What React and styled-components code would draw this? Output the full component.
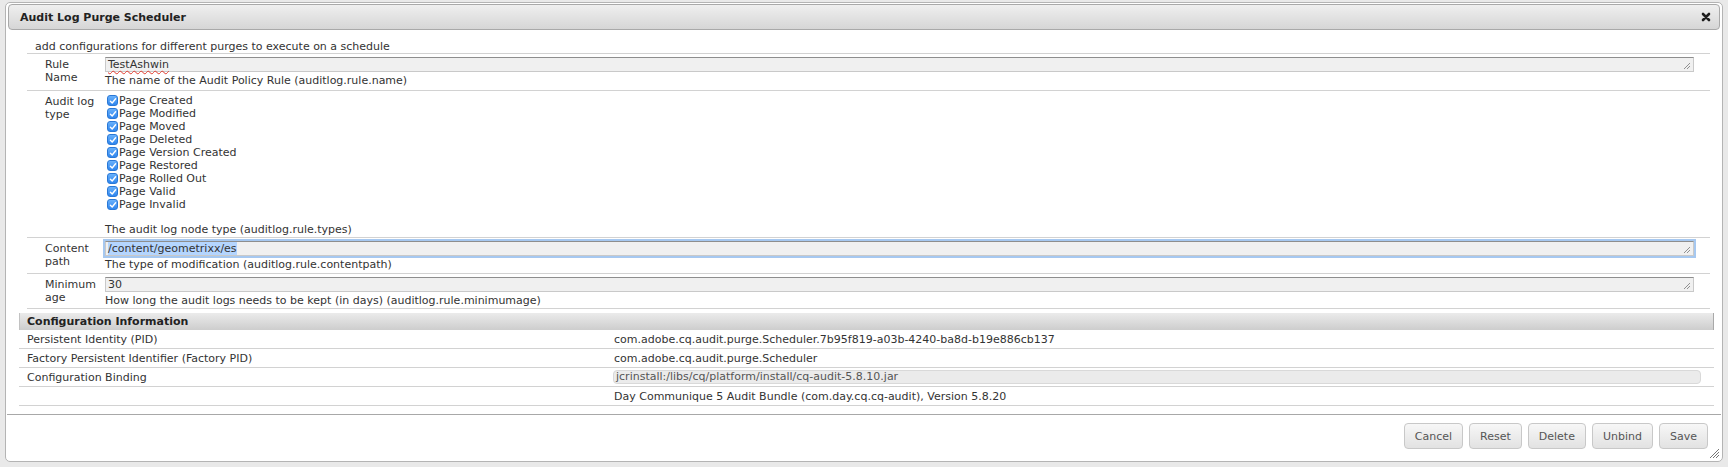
import styled, { createGlobalStyle } from "styled-components";

const GlobalStyle = createGlobalStyle`
  html, body { margin: 0; padding: 0; }
  body {
    background: #e9e9e9;
    font-family: "DejaVu Sans", Verdana, sans-serif;
    font-size: 11px;
    color: #333;
  }
`;

const Dialog = styled.div`
  position: relative;
  box-sizing: border-box;
  margin: 2px 0 0 5px;
  width: 1718px;
  height: 460px;
  background: #fff;
  border: 1px solid #b4b4b4;
  border-radius: 5px;
  padding: 1px 2px 0 2px;
  display: flex;
  flex-direction: column;
`;

const TitleBar = styled.div`
  box-sizing: border-box;
  height: 26px;
  display: flex;
  align-items: center;
  justify-content: space-between;
  padding: 0 8px 0 11px;
  border: 1px solid #a9a9a9;
  border-radius: 4px;
  background: linear-gradient(#efefef, #d6d6d6);
`;

const Title = styled.span`
  font-weight: bold;
  color: #222;
`;

const Body = styled.div`
  flex: 1;
  padding-top: 10px;
`;

const Intro = styled.div`
  line-height: 13px;
  padding-left: 27px;
`;

const Form = styled.div`
  margin: 0 10px 0 19px;
  border-bottom: 1px solid #d2d2d2;
`;

const Row = styled.div`
  display: grid;
  grid-template-columns: 78px 1fr;
  border-top: 1px solid #d2d2d2;
  padding: 3px 16px ${(p) => p.$pb ?? 3}px 0;
  line-height: 13px;
`;

const Label = styled.div`
  padding: 1px 6px 0 18px;
`;

const Field = styled.div`
  position: relative;
  box-sizing: border-box;
  height: 15px;
  margin-bottom: 2px;
  line-height: 13px;
  padding: 0 2px;
  background: #f0f0f0;
  border: 1px solid #c9c9c9;
  border-top-color: #8e8e8e;
  box-shadow: ${(p) => (p.$focused ? "0 0 0 2px #a6c8f0" : "none")};
  white-space: nowrap;
`;

const Misspelled = styled.span`
  text-decoration: underline wavy #e23b2e;
  text-decoration-thickness: 1px;
  text-underline-offset: 2px;
`;

const Selected = styled.span`
  background: #b4d5fe;
`;

const Grip = styled.svg`
  position: absolute;
  right: 2px;
  bottom: 1px;
`;

const Hint = styled.div`
  margin-top: ${(p) => p.$gap ?? 0}px;
`;

const Options = styled.div`
  display: flex;
  flex-direction: column;
`;

const Option = styled.label`
  display: flex;
  align-items: center;
  height: 13px;
`;

const Box = styled.span`
  box-sizing: border-box;
  width: 11px;
  height: 11px;
  margin: 0 1px 0 2px;
  border-radius: 3px;
  background: linear-gradient(#69b1fb, #2f86ee);
  border: 1px solid #2a78d6;
  display: flex;
  align-items: center;
  justify-content: center;
`;

const Config = styled.div`
  margin: 4px 6px 0 11px;
`;

const ConfigHead = styled.div`
  height: 17px;
  line-height: 17px;
  padding-left: 7px;
  font-weight: bold;
  color: #222;
  background: linear-gradient(#ebebeb, #cdcdcd);
  border-left: 1px solid #c2c2c2;
  border-right: 1px solid #a9a9a9;
`;

const ConfigRow = styled.div`
  display: grid;
  grid-template-columns: 587px 1fr;
  align-items: center;
  height: 18px;
  padding-left: 8px;
  border-bottom: 1px solid #d2d2d2;
`;

const Binding = styled.div`
  box-sizing: border-box;
  height: 14px;
  line-height: 12px;
  margin: 0 13px 0 -1px;
  padding-left: 2px;
  background: #ebebeb;
  border: 1px solid #d9d9d9;
  border-radius: 4px;
  color: #555;
`;

const Footer = styled.div`
  box-sizing: border-box;
  height: 47px;
  margin: 0 -1px;
  border-top: 1px solid #a8a8a8;
  padding: 8px 13px 0 0;
  display: flex;
  justify-content: flex-end;
  align-items: flex-start;
  gap: 6px;
`;

const Button = styled.button`
  height: 26px;
  padding: 0 10px;
  font-family: inherit;
  font-size: 11px;
  color: #555;
  background: linear-gradient(#f7f7f7, #e2e2e2);
  border: 1px solid #c8c8c8;
  border-radius: 4px;
`;

const Resizer = styled.svg`
  position: absolute;
  right: 2px;
  bottom: 2px;
`;

const auditTypes = [
  "Page Created",
  "Page Modified",
  "Page Moved",
  "Page Deleted",
  "Page Version Created",
  "Page Restored",
  "Page Rolled Out",
  "Page Valid",
  "Page Invalid",
];

function CloseIcon() {
  return (
    <svg width="10" height="10" viewBox="0 0 10 10">
      <path d="M2 2 L8 8 M8 2 L2 8" stroke="#1e1e1e" strokeWidth="2.6" strokeLinecap="round" />
    </svg>
  );
}

function FieldGrip() {
  return (
    <Grip width="8" height="8" viewBox="0 0 8 8">
      <path d="M1 7 L7 1 M4 7 L7 4" stroke="#777" strokeWidth="0.8" />
    </Grip>
  );
}

function Check() {
  return (
    <svg width="8" height="8" viewBox="0 0 8 8">
      <path d="M1.4 4.2 L3.2 6 L6.6 1.8" fill="none" stroke="#fff" strokeWidth="1.4" strokeLinecap="round" strokeLinejoin="round" />
    </svg>
  );
}

export default function App() {
  return (
    <>
      <GlobalStyle />
      <Dialog>
        <TitleBar>
          <Title>Audit Log Purge Scheduler</Title>
          <CloseIcon />
        </TitleBar>

        <Body>
          <Intro>add configurations for different purges to execute on a schedule</Intro>
          <Form>
            <Row>
              <Label>Rule Name</Label>
              <div>
                <Field>
                  <Misspelled>TestAshwin</Misspelled>
                  <FieldGrip />
                </Field>
                <Hint>The name of the Audit Policy Rule (auditlog.rule.name)</Hint>
              </div>
            </Row>

            <Row $pb={1}>
              <Label>Audit log type</Label>
              <div>
                <Options>
                  {auditTypes.map((t) => (
                    <Option key={t}>
                      <Box>
                        <Check />
                      </Box>
                      {t}
                    </Option>
                  ))}
                </Options>
                <Hint $gap={12}>The audit log node type (auditlog.rule.types)</Hint>
              </div>
            </Row>

            <Row $pb={2}>
              <Label>Content path</Label>
              <div>
                <Field $focused>
                  <Selected>/content/geometrixx/es</Selected>
                  <FieldGrip />
                </Field>
                <Hint>The type of modification (auditlog.rule.contentpath)</Hint>
              </div>
            </Row>

            <Row $pb={1}>
              <Label>Minimum age</Label>
              <div>
                <Field>
                  30
                  <FieldGrip />
                </Field>
                <Hint>How long the audit logs needs to be kept (in days) (auditlog.rule.minimumage)</Hint>
              </div>
            </Row>
          </Form>

          <Config>
            <ConfigHead>Configuration Information</ConfigHead>
            <ConfigRow>
              <span>Persistent Identity (PID)</span>
              <span>com.adobe.cq.audit.purge.Scheduler.7b95f819-a03b-4240-ba8d-b19e886cb137</span>
            </ConfigRow>
            <ConfigRow>
              <span>Factory Persistent Identifier (Factory PID)</span>
              <span>com.adobe.cq.audit.purge.Scheduler</span>
            </ConfigRow>
            <ConfigRow>
              <span>Configuration Binding</span>
              <Binding>jcrinstall:/libs/cq/platform/install/cq-audit-5.8.10.jar</Binding>
            </ConfigRow>
            <ConfigRow>
              <span />
              <span>Day Communique 5 Audit Bundle (com.day.cq.cq-audit), Version 5.8.20</span>
            </ConfigRow>
          </Config>
        </Body>

        <Footer>
          <Button>Cancel</Button>
          <Button>Reset</Button>
          <Button>Delete</Button>
          <Button>Unbind</Button>
          <Button>Save</Button>
        </Footer>

        <Resizer width="11" height="11" viewBox="0 0 11 11">
          <path d="M1 10 L10 1 M4 10 L10 4 M7 10 L10 7" stroke="#666" strokeWidth="0.9" />
        </Resizer>
      </Dialog>
    </>
  );
}
